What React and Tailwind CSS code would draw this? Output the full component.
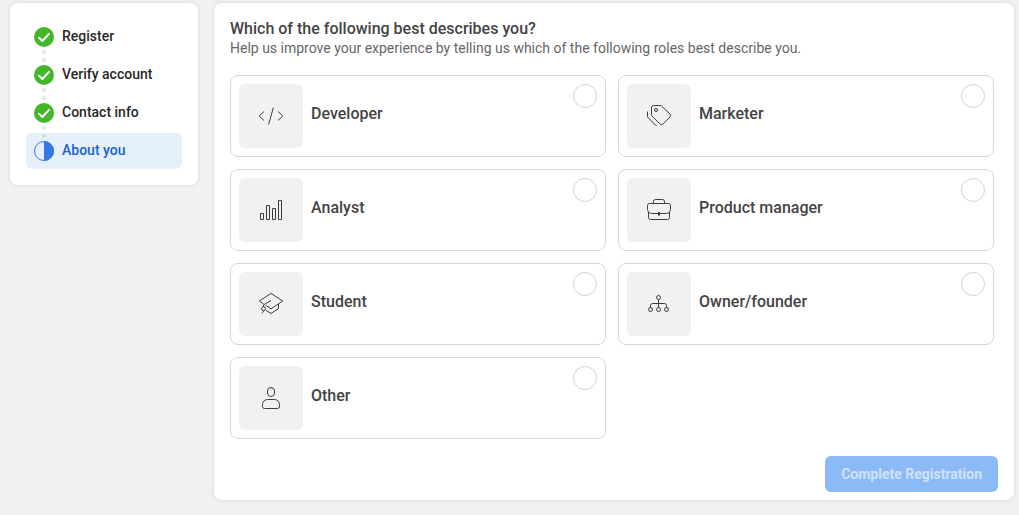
import { useState } from "react";

const steps = [
  { label: "Register", done: true },
  { label: "Verify account", done: true },
  { label: "Contact info", done: true },
  { label: "About you", done: false },
];

const roles = [
  {
    id: "developer",
    label: "Developer",
    icon: <path d="M25 27.5 20.2 32l4.8 4.5M34.4 23.5l-4.8 17M39 27.5l4.8 4.5-4.8 4.5" />,
  },
  {
    id: "marketer",
    label: "Marketer",
    icon: (
      <>
        <path d="M26.5 21.5h6.8a2 2 0 0 1 1.4.6l8.3 8a2 2 0 0 1 0 2.8l-7.1 7.2a2 2 0 0 1-2.8 0l-8-7.9a2 2 0 0 1-.6-1.4v-7.3a2 2 0 0 1 2-2z" />
        <circle cx="29" cy="26" r="1.5" />
        <path d="M20.5 27.5v4.7a2 2 0 0 0 .6 1.4l7.2 7.4a2 2 0 0 0 1.4.6" />
      </>
    ),
  },
  {
    id: "analyst",
    label: "Analyst",
    icon: (
      <path d="M21.5 35.5h3v6h-3zM27.5 27.5h3v14h-3zM33.5 30.5h3v11h-3zM39.5 22.5h3v19h-3z" />
    ),
  },
  {
    id: "product-manager",
    label: "Product manager",
    icon: (
      <>
        <path d="M22.5 25.5h19a2 2 0 0 1 2 2v4a4 4 0 0 1-4 4h-15a4 4 0 0 1-4-4v-4a2 2 0 0 1 2-2z" />
        <path d="M26.5 25.5v-2a2 2 0 0 1 2-2h7a2 2 0 0 1 2 2v2M21.5 34v5.5a2 2 0 0 0 2 2h17a2 2 0 0 0 2-2V34" />
        <path d="M32 34v3.5" strokeWidth="2" />
      </>
    ),
  },
  {
    id: "student",
    label: "Student",
    icon: (
      <>
        <path d="M32 21.4 43.7 29 32 36.8 26.5 33.2M24.5 31.9 20.3 29 32 21.4" />
        <path d="M32 28.5l-7.5 4.4v1.8M39.5 32v4.7L32 41.4l-5-3" />
        <circle cx="24.5" cy="36.7" r="2" />
        <path d="M24.5 38.7c0 1.3-.6 2-1.8 2.4" />
      </>
    ),
  },
  {
    id: "owner",
    label: "Owner/founder",
    icon: (
      <>
        <circle cx="31.5" cy="25.5" r="2" />
        <circle cx="23.5" cy="37.5" r="2" />
        <circle cx="31.5" cy="37.5" r="2" />
        <circle cx="39.5" cy="37.5" r="2" />
        <path d="M31.5 27.5v8M23.5 35.5v-2a2 2 0 0 1 2-2h12a2 2 0 0 1 2 2v2" />
      </>
    ),
  },
  {
    id: "other",
    label: "Other",
    icon: (
      <>
        <rect x="28.5" y="21.5" width="7" height="9" rx="3.5" />
        <path d="M23.5 40.5v-2a5 5 0 0 1 5-5h7a5 5 0 0 1 5 5v2a2 2 0 0 1-2 2h-13a2 2 0 0 1-2-2z" />
      </>
    ),
  },
];

function StepIcon({ done }) {
  return (
    <svg viewBox="0 0 20 20" className="size-5" aria-hidden="true">
      {done ? (
        <>
          <circle cx="10" cy="10" r="10" fill="#42b72a" />
          <path
            d="M5 10.7 8.4 14 15 6.9"
            fill="none"
            stroke="#fff"
            strokeWidth="2"
            strokeLinecap="round"
            strokeLinejoin="round"
          />
        </>
      ) : (
        <>
          <circle cx="10" cy="10" r="9.5" fill="#e7f0fd" stroke="#3578e5" />
          <path d="M10 0a10 10 0 0 1 0 20z" fill="#3578e5" />
        </>
      )}
    </svg>
  );
}

function Step({ label, done }) {
  return (
    <li
      aria-current={done ? undefined : "step"}
      className={
        done
          ? "flex h-9 items-center gap-2 rounded-md px-2 text-[#282828]"
          : "flex h-9 items-center gap-2 rounded-md bg-[#e6f0fd] px-2 text-[#1763cf]"
      }
    >
      <span className="relative shrink-0">
        <StepIcon done={done} />
        {done && (
          <span className="absolute left-2 top-full z-10 flex flex-col gap-1 pt-[3px]">
            <span className="size-1 rounded-full bg-black/10" />
            <span className="size-1 rounded-full bg-black/10" />
          </span>
        )}
      </span>
      <span className="pb-0.5 text-sm font-medium">{label}</span>
    </li>
  );
}

function RoleCard({ role, checked, onSelect }) {
  return (
    <label
      htmlFor={role.id}
      className="flex cursor-pointer items-start gap-2 rounded-lg border border-[#d8d8d8] p-2"
    >
      <span className="shrink-0 rounded-md bg-[#f1f1f1]">
        <svg
          viewBox="0 0 64 64"
          className="size-16"
          fill="none"
          stroke="#3c3c3c"
          strokeLinejoin="round"
          aria-hidden="true"
        >
          {role.icon}
        </svg>
      </span>
      <span className="grow self-center pb-1 text-base font-medium text-[#444]">{role.label}</span>
      <input
        id={role.id}
        type="radio"
        name="role"
        checked={checked}
        onChange={onSelect}
        className="size-6 shrink-0 appearance-none rounded-full border border-[#d3d3d3] bg-white checked:border-[7px] checked:border-[#1877f2]"
      />
    </label>
  );
}

export default function App() {
  const [selected, setSelected] = useState(null);

  return (
    <div className="flex min-h-screen items-start gap-4 bg-[#f1f1f1] pb-4 pl-[10px] pr-[5px] pt-[3px] font-['Roboto',sans-serif]">
      <nav
        aria-label="Registration steps"
        className="w-47 shrink-0 rounded-lg bg-white p-4 shadow-[0_0_4px_rgba(0,0,0,0.12)]"
      >
        <ol className="flex flex-col gap-0.5">
          {steps.map((step) => (
            <Step key={step.label} {...step} />
          ))}
        </ol>
      </nav>
      <main className="min-w-0 grow rounded-lg bg-white px-4 pb-2 pt-4 shadow-[0_0_4px_rgba(0,0,0,0.12)]">
        <form onSubmit={(event) => event.preventDefault()}>
          <h1 className="text-base/5 font-medium text-[#444]">
            Which of the following best describes you?
          </h1>
          <p className="text-sm/[18px] text-[#666]">
            Help us improve your experience by telling us which of the following roles best describe
            you.
          </p>
          <div className="mr-1 mt-[18px] grid grid-cols-2 gap-3">
            {roles.map((role) => (
              <RoleCard
                key={role.id}
                role={role}
                checked={selected === role.id}
                onSelect={() => setSelected(role.id)}
              />
            ))}
          </div>
          <div className="mt-[17px] flex justify-end">
            <button
              type="submit"
              disabled={!selected}
              className="h-9 rounded-md bg-[#1877f2] px-4 text-sm font-bold text-white disabled:bg-[#8bbaf8] disabled:text-[#d0e3fc]"
            >
              Complete Registration
            </button>
          </div>
        </form>
      </main>
    </div>
  );
}
